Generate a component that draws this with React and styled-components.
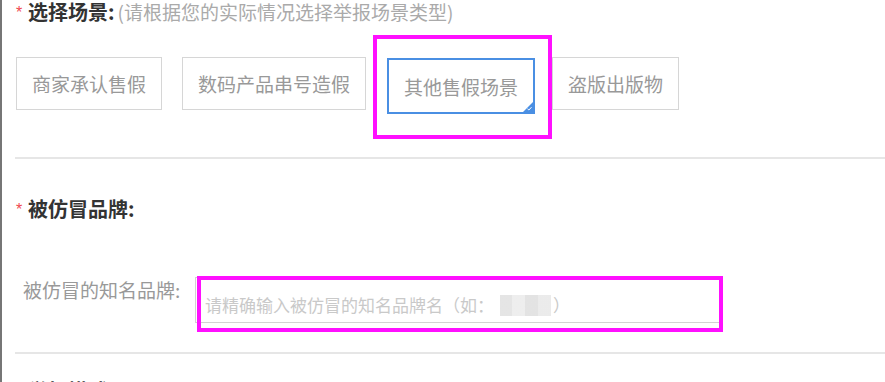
import React from "react";
import styled, { createGlobalStyle } from "styled-components";

const Global = createGlobalStyle`
  html, body { margin: 0; padding: 0; background: #fff; overflow: hidden; }
  body { font-family: "Noto Sans CJK SC", "Noto Sans", sans-serif; }
  * { box-sizing: border-box; }
`;

const Page = styled.div`
  height: 382px;
  width: 885px;
  border-left: 2px solid #767676;
  padding-left: 13px;
  display: flex;
  flex-direction: column;
  overflow: hidden;
`;

const TitleRow = styled.div`
  display: flex;
  align-items: center;
  height: 22px;
  padding-left: 1px;
  margin-top: ${(p) => p.$top || 0}px;
  white-space: nowrap;
  flex-shrink: 0;
`;

const Star = styled.span`
  color: #f04850;
  font-size: 16px;
  line-height: 16px;
  height: 16px;
  width: 12px;
  margin-top: 2px;
  font-family: "Liberation Sans", sans-serif;
`;

const Title = styled.span`
  font-size: 20px;
  line-height: 22px;
  font-weight: 700;
  color: #333;
`;

const Hint = styled.span`
  font-size: 19px;
  line-height: 22px;
  color: #aaa;
  margin-left: 3px;
`;

const Options = styled.div`
  display: flex;
  align-items: flex-start;
  margin-top: 34px;
  padding-left: 1px;
`;

const OptionWrap = styled.div`
  position: relative;
  margin-right: ${(p) => p.$gap}px;
`;

const Option = styled.div`
  height: ${(p) => (p.$active ? 56 : 53)}px;
  margin-top: ${(p) => (p.$active ? 1 : 0)}px;
  padding: 0 15px;
  display: flex;
  align-items: center;
  justify-content: center;
  border: ${(p) => (p.$active ? "2px solid #4a8fe3" : "1px solid #d6d6d6")};
  font-size: 19px;
  color: #999;
  white-space: nowrap;
  position: relative;
  background: #fff;
`;

const Corner = styled.span`
  position: absolute;
  right: 0;
  bottom: 0;
  width: 0;
  height: 0;
  border-left: 10px solid transparent;
  border-bottom: 10px solid #4a8fe3;
`;

const CornerCheck = styled.svg`
  position: absolute;
  right: 1px;
  bottom: 1px;
  width: 5px;
  height: 5px;
`;

const Highlight = styled.div`
  position: absolute;
  border: 4px solid #ff10ff;
  left: ${(p) => p.$l}px;
  top: ${(p) => p.$t}px;
  width: ${(p) => p.$w}px;
  height: ${(p) => p.$h}px;
  pointer-events: none;
`;

const Divider = styled.div`
  height: 2px;
  background: #e6e6e6;
  margin-top: ${(p) => p.$top}px;
  flex-shrink: 0;
`;

const FieldRow = styled.div`
  display: flex;
  align-items: flex-start;
  margin-top: 57px;
  padding-left: 8px;
`;

const Label = styled.div`
  width: 172px;
  font-size: 19px;
  line-height: 20px;
  color: #999;
  margin-top: 3px;
  white-space: nowrap;
`;

const InputWrap = styled.div`
  position: relative;
`;

const FakeInput = styled.div`
  width: 525px;
  height: 46px;
  border: 1px solid #d2d2d2;
  padding: 10px 0 0 9px;
  font-size: 17px;
  line-height: 20px;
  color: #c9c9c9;
  white-space: nowrap;
  display: flex;
  align-items: center;
`;

const Mosaic = styled.span`
  display: inline-block;
  width: 51px;
  height: 21px;
  margin: 0 2px 0 6px;
  background:
    linear-gradient(90deg, #e2e2e2 0 12px, #ececec 12px 25px, #e0e0e0 25px 38px, #e9e9e9 38px 51px);
  opacity: 0.9;
`;

export default function App() {
  return (
    <>
      <Global />
      <Page>
        <TitleRow $top={1}>
          <Star>*</Star>
          <Title>选择场景:</Title>
          <Hint>(请根据您的实际情况选择举报场景类型)</Hint>
        </TitleRow>
        <Options>
          <OptionWrap $gap={20}>
            <Option>商家承认售假</Option>
          </OptionWrap>
          <OptionWrap $gap={21}>
            <Option>数码产品串号造假</Option>
          </OptionWrap>
          <OptionWrap $gap={17}>
            <Option $active>
              其他售假场景
              <Corner />
              <CornerCheck viewBox="0 0 5 5">
                <path d="M0.5 2.8 L1.9 4 L4.5 1.2" stroke="#fff" strokeWidth="1" fill="none" />
              </CornerCheck>
            </Option>
            <Highlight $l={-14} $t={-22} $w={179} $h={104} />
          </OptionWrap>
          <OptionWrap $gap={0}>
            <Option>盗版出版物</Option>
          </OptionWrap>
        </Options>
        <Divider $top={43} />
        <TitleRow $top={39}>
          <Star>*</Star>
          <Title>被仿冒品牌:</Title>
        </TitleRow>
        <FieldRow>
          <Label>被仿冒的知名品牌:</Label>
          <InputWrap>
            <FakeInput>
              请精确输入被仿冒的知名品牌名（如：<Mosaic />）
            </FakeInput>
            <Highlight $l={2} $t={-1} $w={526} $h={56} />
          </InputWrap>
        </FieldRow>
        <Divider $top={29} />
        <TitleRow $top={26}>
          <Star>*</Star>
          <Title>举报描述:</Title>
        </TitleRow>
      </Page>
    </>
  );
}
